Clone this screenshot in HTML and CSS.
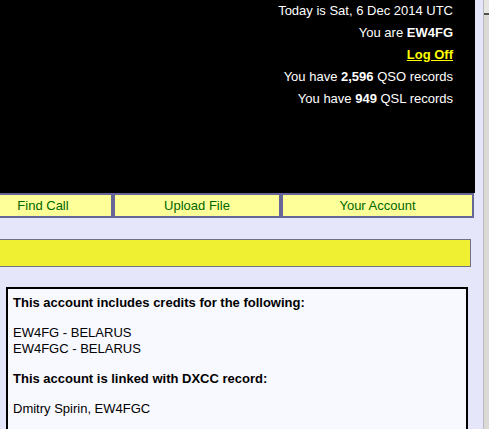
FILE: index.html
```
<!DOCTYPE html>
<html>
<head>
<meta charset="utf-8">
<link rel="stylesheet" href="styles.css">
</head>
<body>
<div class="viewport">
  <div class="main">
    <div class="page">
      <div class="header">
        <div class="line">Today is Sat, 6 Dec 2014 UTC</div>
        <div class="line">You are <b>EW4FG</b></div>
        <div class="line"><a class="logoff" href="#">Log Off</a></div>
        <div class="line">You have <b>2,596</b> QSO records</div>
        <div class="line">You have <b>949</b> QSL records</div>
      </div>
      <div class="nav">
        <a class="btn b1" href="#">Find Call</a>
        <a class="btn b2" href="#">Upload File</a>
        <a class="btn b3" href="#">Your Account</a>
      </div>
      <div class="notice"></div>
      <div class="box">
        <p class="bold">This account includes credits for the following:</p>
        <p>EW4FG - BELARUS<br>EW4FGC - BELARUS</p>
        <p class="bold">This account is linked with DXCC record:</p>
        <p>Dmitry Spirin, EW4FGC</p>
      </div>
    </div>
  </div>
  <div class="scrollbar"><div class="arrow"></div></div>
</div>
</body>
</html>
```
FILE: styles.css
```
html, body {
  margin: 0;
  padding: 0;
  height: 100%;
  overflow: hidden;
}
body {
  background: #e6e6fa;
  font-family: "Liberation Sans", Arial, sans-serif;
  font-size: 13px;
  color: #000;
}
.viewport {
  display: flex;
  height: 100%;
}
.main {
  flex: 1;
  overflow: hidden;
}
.page {
  margin-left: -27px;
  width: 502px;
}
.header {
  background: #000;
  color: #fff;
  height: 193px;
  text-align: right;
  padding-right: 22px;
  box-sizing: border-box;
}
.header .line {
  height: 22px;
  line-height: 22px;
}
.logoff {
  color: #ffff00;
  font-weight: bold;
  text-decoration: underline;
}
.nav {
  display: flex;
}
.btn {
  display: block;
  box-sizing: border-box;
  height: 25px;
  line-height: 21px;
  border: 2px solid #666699;
  background: #ffff99;
  color: #006600;
  text-align: center;
  text-decoration: none;
}
.b1 { width: 140px; }
.b2 { width: 168px; }
.b3 { width: 193px; }
.notice {
  margin: 21px 4px 0 0;
  height: 28px;
  box-sizing: border-box;
  background: #f0f032;
  border: 1px solid #707088;
}
.box {
  margin: 20px 7px 0 33px;
  border: 2px solid #000;
  background: #f8f8ff;
  padding: 6px 5px 20px 5px;
  height: 200px;
}
.box p {
  margin: 0 0 14px 0;
  line-height: 16px;
}
.box .bold {
  font-weight: bold;
}
.scrollbar {
  width: 5px;
  border-left: 1px solid #b8b8c0;
  background: #dcdad4;
}
.arrow {
  height: 13px;
  background: #e8e6e0;
  border-bottom: 2px solid #505050;
}
```
